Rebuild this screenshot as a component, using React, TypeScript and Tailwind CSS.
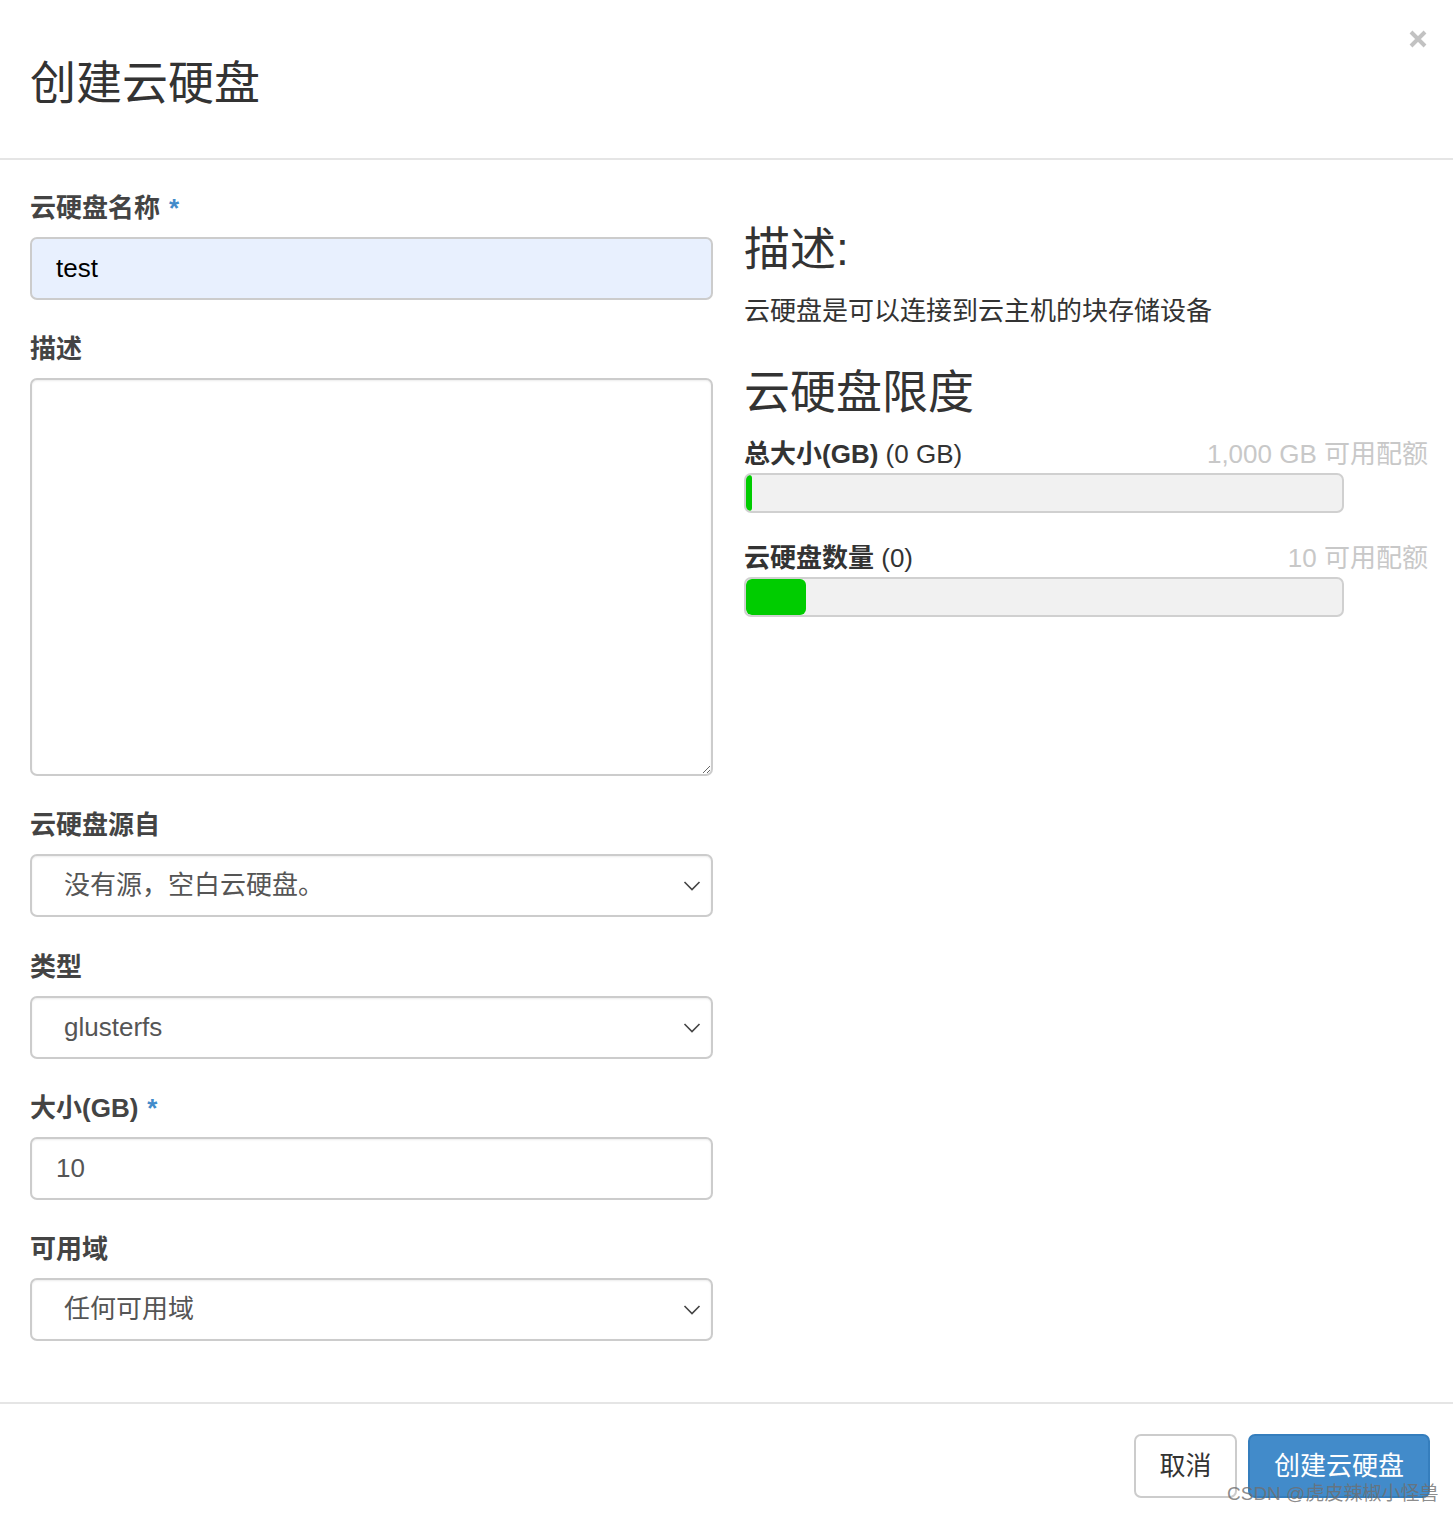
import React from 'react'

const font = { fontFamily: '"Liberation Sans", "Noto Sans CJK SC", sans-serif' }

function Chevron() {
    return (
        <svg className="h-[12px] w-[18px]" viewBox="0 0 18 12" fill="none" aria-hidden="true">
            <polyline points="1.5,2 9,9.5 16.5,2" stroke="#444" strokeWidth="1.6" />
        </svg>
    )
}

function Label({ text, required }: { text: string; required?: boolean }) {
    return (
        <div className="mb-[12px] text-[26px] leading-[34px] font-bold text-[#444]">
            {text}
            {required && <span className="ml-[9px] text-[#428bca]">*</span>}
        </div>
    )
}

function Select({ value }: { value: string }) {
    return (
        <div className="flex h-[63px] items-center justify-between rounded-[7px] border-2 border-[#ccc] bg-white pl-[32px] pr-[10px] shadow-[inset_0_1px_2px_rgba(0,0,0,0.08)]">
            <span className="text-[26px] text-[#555]">{value}</span>
            <Chevron />
        </div>
    )
}

function Quota({ label, value, avail, pct }: { label: string; value: string; avail: string; pct: number }) {
    return (
        <div>
            <div className="flex items-center justify-between text-[26px] leading-[36px]">
                <div className="text-[#333]">
                    <span className="font-bold">{label}</span> {value}
                </div>
                <div className="text-[#c8c8c8]">{avail}</div>
            </div>
            <div className="mt-[1px] w-[600px] h-[40px] rounded-[7px] border-2 border-[#d0d0d0] bg-[#f1f1f1] overflow-hidden">
                <div className="h-full rounded-[6px] bg-[#00cc00]" style={{ width: pct + 'px' }} />
            </div>
        </div>
    )
}

export default function App() {
    return (
        <div className="relative w-[1453px] h-[1513px] bg-white overflow-hidden" style={font}>
            <div className="relative h-[160px] border-b-2 border-[#e5e5e5] px-[30px]">
                <h1 className="pt-[55px] text-[46px] leading-[56px] text-[#333]">创建云硬盘</h1>
                <button className="absolute right-[26px] top-[30px]">
                    <svg className="h-[18px] w-[18px]" viewBox="0 0 18 18" aria-hidden="true">
                        <path d="M2 2 L16 16 M16 2 L2 16" stroke="#c2c2c2" strokeWidth="4" />
                    </svg>
                </button>
            </div>

            <div className="grid grid-cols-[683px_684px] gap-[31px] pl-[30px] pt-[31px] pb-[61px] border-b-2 border-[#e5e5e5]">
                <div className="flex flex-col gap-[32px]">
                    <div>
                        <Label text="云硬盘名称" required />
                        <div className="flex h-[63px] items-center rounded-[7px] border-2 border-[#ccc] bg-[#e8f0fe] px-[24px] text-[26px] text-black">
                            test
                        </div>
                    </div>
                    <div>
                        <Label text="描述" />
                        <textarea
                            readOnly
                            className="block w-full h-[398px] rounded-[7px] border-2 border-[#ccc] bg-white shadow-[inset_0_1px_2px_rgba(0,0,0,0.08)] resize-y outline-none"
                        />
                    </div>
                    <div>
                        <Label text="云硬盘源自" />
                        <Select value="没有源，空白云硬盘。" />
                    </div>
                    <div className="pt-[1px]">
                        <Label text="类型" />
                        <Select value="glusterfs" />
                    </div>
                    <div>
                        <Label text="大小(GB)" required />
                        <div className="flex h-[63px] items-center rounded-[7px] border-2 border-[#ccc] bg-white px-[24px] text-[26px] text-[#555] shadow-[inset_0_1px_2px_rgba(0,0,0,0.08)]">
                            10
                        </div>
                    </div>
                    <div>
                        <Label text="可用域" />
                        <Select value="任何可用域" />
                    </div>
                </div>

                <div className="pt-[33px]">
                    <h3 className="text-[46px] leading-[50px] text-[#333]">描述:</h3>
                    <p className="mt-[19px] text-[26px] leading-[36px] text-[#333]">云硬盘是可以连接到云主机的块存储设备</p>
                    <h3 className="mt-[35px] text-[46px] leading-[56px] text-[#333]">云硬盘限度</h3>
                    <div className="mt-[16px] flex flex-col gap-[27px]">
                        <Quota label="总大小(GB)" value="(0 GB)" avail="1,000 GB 可用配额" pct={6} />
                        <Quota label="云硬盘数量" value="(0)" avail="10 可用配额" pct={60} />
                    </div>
                </div>
            </div>

            <div className="flex justify-end gap-[11px] pt-[30px] pr-[23px]">
                <button className="h-[64px] w-[103px] rounded-[7px] border-2 border-[#ccc] bg-white text-[26px] text-[#333]">取消</button>
                <button className="h-[64px] w-[182px] rounded-[7px] border-2 border-[#357ebd] bg-[#428bca] text-[26px] text-white">创建云硬盘</button>
            </div>

            <div className="absolute left-[1227px] top-[1481px] text-[19px] leading-[26px] text-[rgba(110,110,110,0.8)]">
                CSDN @虎皮辣椒小怪兽
            </div>
        </div>
    )
}
